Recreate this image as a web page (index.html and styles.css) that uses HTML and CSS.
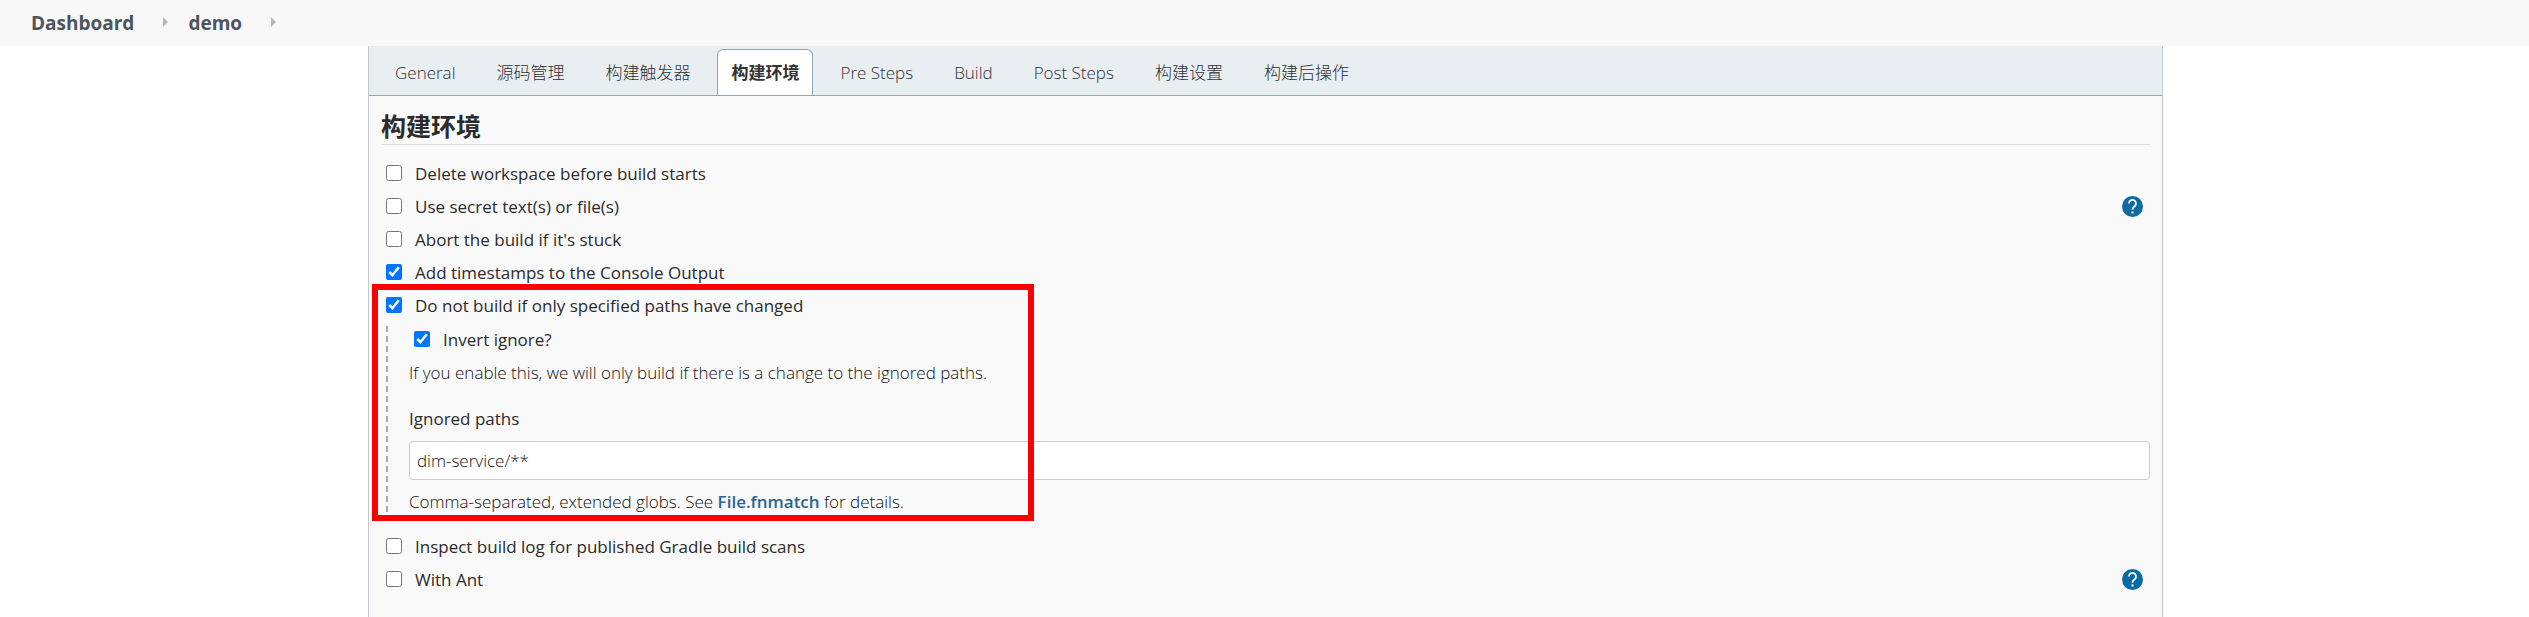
FILE: index.html
```html
<!DOCTYPE html>
<html lang="zh-CN">
<head>
<meta charset="utf-8">
<title>demo Config</title>
<link rel="stylesheet" href="styles.css">
</head>
<body>
<nav class="breadcrumbs" aria-label="Breadcrumb">
  <a href="#">Dashboard</a>
  <svg class="arrow" viewBox="0 0 5 10" aria-hidden="true"><path d="M0 0 5 5 0 10Z"/></svg>
  <a href="#">demo</a>
  <svg class="arrow" viewBox="0 0 5 10" aria-hidden="true"><path d="M0 0 5 5 0 10Z"/></svg>
</nav>
<main class="panel">
  <div class="tabs" role="tablist">
    <button class="tab" role="tab" type="button">General</button>
    <button class="tab" role="tab" type="button">源码管理</button>
    <button class="tab" role="tab" type="button">构建触发器</button>
    <button class="tab active" role="tab" type="button" aria-selected="true">构建环境</button>
    <button class="tab" role="tab" type="button">Pre Steps</button>
    <button class="tab" role="tab" type="button">Build</button>
    <button class="tab" role="tab" type="button">Post Steps</button>
    <button class="tab" role="tab" type="button">构建设置</button>
    <button class="tab" role="tab" type="button">构建后操作</button>
  </div>
  <form class="section">
    <h1 class="title">构建环境</h1>
    <div class="row"><label class="option"><input type="checkbox">Delete workspace before build starts</label></div>
    <div class="row"><label class="option"><input type="checkbox">Use secret text(s) or file(s)</label>
      <button class="help" type="button" aria-label="Help"><svg viewBox="0 0 24 24"><path d="M12 0a12 12 0 1 0 0 24 12 12 0 0 0 0-24Z" fill="#0b6aa2"/><path d="M8 8.600a4 4 0 1 1 6.900 2.600C13.600 12.600 12 13.100 12 15.600" fill="none" stroke="#fff" stroke-width="2"/><path d="M10.800 17.600h2.400V20h-2.400Z" fill="#fff"/></svg></button></div>
    <div class="row"><label class="option"><input type="checkbox">Abort the build if it's stuck</label></div>
    <div class="row"><label class="option"><input type="checkbox" checked>Add timestamps to the Console Output</label></div>
    <div class="group">
      <div class="row"><label class="option"><input type="checkbox" checked>Do not build if only specified paths have changed</label></div>
      <div class="nested">
        <label class="option inner"><input type="checkbox" checked>Invert ignore?</label>
        <p class="note">If you enable this, we will only build if there is a change to the ignored paths.</p>
        <label class="field-label" for="paths">Ignored paths</label>
        <input class="field" id="paths" type="text" value="dim-service/**">
        <p class="note">Comma-separated, extended globs. See <a href="#">File.fnmatch</a> for details.</p>
      </div>
      <div class="highlight" aria-hidden="true"></div>
    </div>
    <div class="row"><label class="option"><input type="checkbox">Inspect build log for published Gradle build scans</label></div>
    <div class="row"><label class="option"><input type="checkbox">With Ant</label>
      <button class="help" type="button" aria-label="Help"><svg viewBox="0 0 24 24"><path d="M12 0a12 12 0 1 0 0 24 12 12 0 0 0 0-24Z" fill="#0b6aa2"/><path d="M8 8.600a4 4 0 1 1 6.900 2.600C13.600 12.600 12 13.100 12 15.600" fill="none" stroke="#fff" stroke-width="2"/><path d="M10.800 17.600h2.400V20h-2.400Z" fill="#fff"/></svg></button></div>
  </form>
</main>
</body>
</html>
```
FILE: styles.css
```css
* { box-sizing: border-box; }
body {
  margin: 0;
  min-height: 100vh;
  display: flex;
  flex-direction: column;
  background: #fff;
  color: #2b2b2b;
  font-family: "Open Sans", "Noto Sans CJK SC", sans-serif;
  font-size: 17px;
  line-height: 24px;
}
.breadcrumbs {
  display: flex;
  align-items: center;
  height: 46px;
  padding: 0 31px;
  background: #f8f8f8;
}
.breadcrumbs a {
  color: #4d545d;
  font-size: 19px;
  font-weight: 700;
  line-height: 24px;
  text-decoration: none;
}
.arrow {
  width: 5px;
  height: 10px;
  margin: 0 20px 3px 29px;
  fill: #b4b7ba;
}
.panel {
  flex: 1;
  margin: 0 366px 0 368px;
  border: solid #c4c8cc;
  border-width: 0 1px;
  background: #f9f9f9;
}
.tabs {
  display: flex;
  align-items: flex-end;
  gap: 13px;
  height: 50px;
  padding: 0 12px;
  border-bottom: 1px solid #98a4ae;
  background: #e9eef1;
}
.tab {
  height: 46px;
  padding: 0 13px;
  border: 1px solid transparent;
  border-bottom: 0;
  border-radius: 6px 6px 0 0;
  background: none;
  color: #2c3238;
  font: inherit;
  font-weight: 300;
}
.tab.active {
  border-color: #98a4ae;
  background: #fff;
  color: #333;
  font-weight: 700;
}
.section { padding: 12px; }
.title {
  margin: 0 0 12px;
  border-bottom: 1px solid #dcdfe2;
  font-size: 25px;
  font-weight: 700;
  line-height: 36px;
}
.row {
  display: flex;
  align-items: center;
  justify-content: space-between;
  height: 33px;
  padding: 0 7px 0 5px;
}
.option {
  display: flex;
  align-items: center;
  gap: 13px;
  font-weight: 500;
}
.option input {
  width: 16px;
  height: 16px;
  margin: 0 0 2px;
}
.help {
  width: 21px;
  height: 21px;
  padding: 0;
  border: 0;
  background: none;
}
.help svg { display: block; }
.group {
  position: relative;
  margin-bottom: 16px;
}
.nested {
  display: flex;
  flex-direction: column;
  margin: 4px 0 0 5px;
  padding-left: 23px;
  background: repeating-linear-gradient(#aaa 0 6px, transparent 6px 10px) left / 2px 100% no-repeat;
}
.option.inner {
  height: 28px;
  padding-left: 5px;
}
.note {
  margin: 7px 0 0;
  color: #111;
  font-weight: 300;
}
.field + .note { margin-top: 10px; }
.note a {
  color: #2a6496;
  font-weight: 600;
  text-decoration: none;
}
.field-label {
  margin: 22px 0 10px;
  font-weight: 500;
}
.field {
  height: 39px;
  padding: 0 7px;
  border: 1px solid #ccc;
  border-radius: 4px;
  background: #fff;
  color: #111;
  font: inherit;
  font-weight: 300;
}
.highlight {
  position: absolute;
  top: -5px;
  bottom: -7px;
  left: -9px;
  width: 662px;
  border: 6px solid #fb0000;
  pointer-events: none;
}
```
